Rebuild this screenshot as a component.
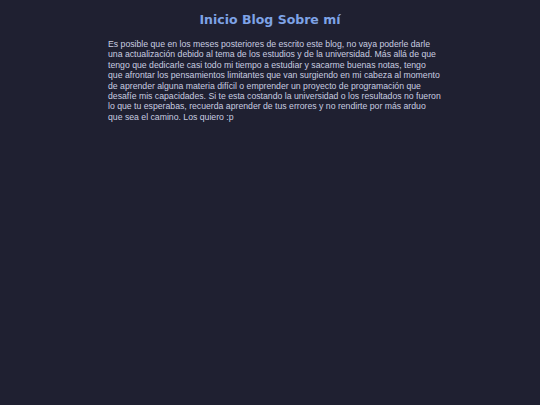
export default function App() {
  return (
    <div className="min-h-[405px] w-full bg-[#1f2031] pt-[12px]">
      <nav className="text-center font-['DejaVu_Sans',sans-serif] text-[12.5px] leading-[15px] font-bold text-[#7ea3e6]">
        <a>Inicio</a> <a>Blog</a> <a>Sobre mí</a>
      </nav>
      <main className="ml-[108px] mt-[12px] w-[334px] font-['Liberation_Sans',Arial,sans-serif] text-[8.7px] leading-[10.4px] text-[#c9cde0]">
        <p>
          Es posible que en los meses posteriores de escrito este blog, no vaya poderle darle una
          actualización debido al tema de los estudios y de la universidad. Más allá de que tengo
          que dedicarle casi todo mi tiempo a estudiar y sacarme buenas notas, tengo que afrontar
          los pensamientos limitantes que van surgiendo en mi cabeza al momento de aprender alguna
          materia difícil o emprender un proyecto de programación que desafíe mis capacidades. Si te
          esta costando la universidad o los resultados no fueron lo que tu esperabas, recuerda
          aprender de tus errores y no rendirte por más arduo que sea el camino. Los quiero :p
        </p>
      </main>
    </div>
  );
}
